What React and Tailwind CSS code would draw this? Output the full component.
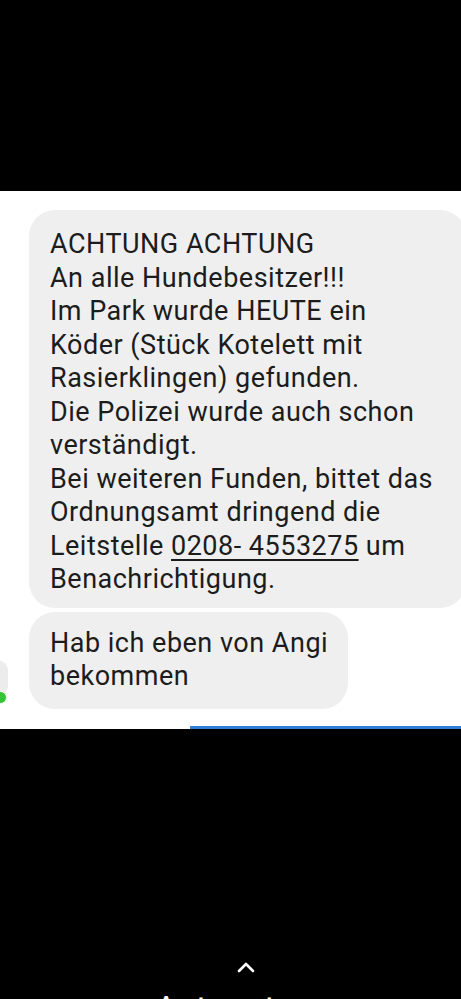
export default function App() {
  const font = { fontFamily: 'Roboto, "Noto Sans", sans-serif' };
  return (
    <div className="w-[461px] h-[999px] bg-black overflow-hidden flex flex-col" style={font}>
      <div className="h-[191px] bg-black shrink-0" />
      <div className="h-[538px] bg-white shrink-0 relative flex flex-col pt-[19px] gap-[4px]">
        <div className="ml-[29px] w-[437px] bg-[#efefef] rounded-[26px] pl-[21px] pr-[10px] pt-[18px] pb-[11px] text-[27px] tracking-[0.5px] leading-[33.5px] text-[#1c1c1c] whitespace-nowrap">
          ACHTUNG ACHTUNG<br />
          An alle Hundebesitzer!!!<br />
          Im Park wurde HEUTE ein<br />
          Köder (Stück Kotelett mit<br />
          Rasierklingen) gefunden.<br />
          Die Polizei wurde auch schon<br />
          verständigt.<br />
          Bei weiteren Funden, bittet das<br />
          Ordnungsamt dringend die<br />
          Leitstelle <span className="underline decoration-[1.5px] underline-offset-[4px]">0208- 4553275</span> um<br />
          Benachrichtigung.
        </div>
        <div className="ml-[29px] w-[319px] bg-[#efefef] rounded-[26px] pl-[21px] pr-[8px] pt-[15px] pb-[15px] text-[27px] tracking-[0.5px] leading-[33.5px] text-[#1c1c1c] whitespace-nowrap">
          Hab ich eben von Angi<br />
          bekommen
        </div>
        <div className="absolute left-[-14px] top-[469px] w-[22px] h-[36px] rounded-full bg-[#ececec]" />
        <div className="absolute left-[-6px] top-[500px] w-[13px] h-[13px] rounded-full bg-[#35c435] border-[1px] border-white" />
        <div className="absolute left-[190px] right-0 bottom-0 h-[3px] bg-[#2f7fd6]" />
      </div>
      <div className="flex-1 bg-black relative">
        <svg className="absolute left-[236px] top-[232px]" width="20" height="12" viewBox="0 0 20 12">
          <path d="M3 10 L10 3 L17 10" stroke="white" strokeWidth="2.6" fill="none" strokeLinecap="round" strokeLinejoin="round" />
        </svg>
        <div className="absolute left-[155px] top-[262px] text-white text-[34px] leading-none whitespace-nowrap">
          Antworten
        </div>
      </div>
    </div>
  );
}
